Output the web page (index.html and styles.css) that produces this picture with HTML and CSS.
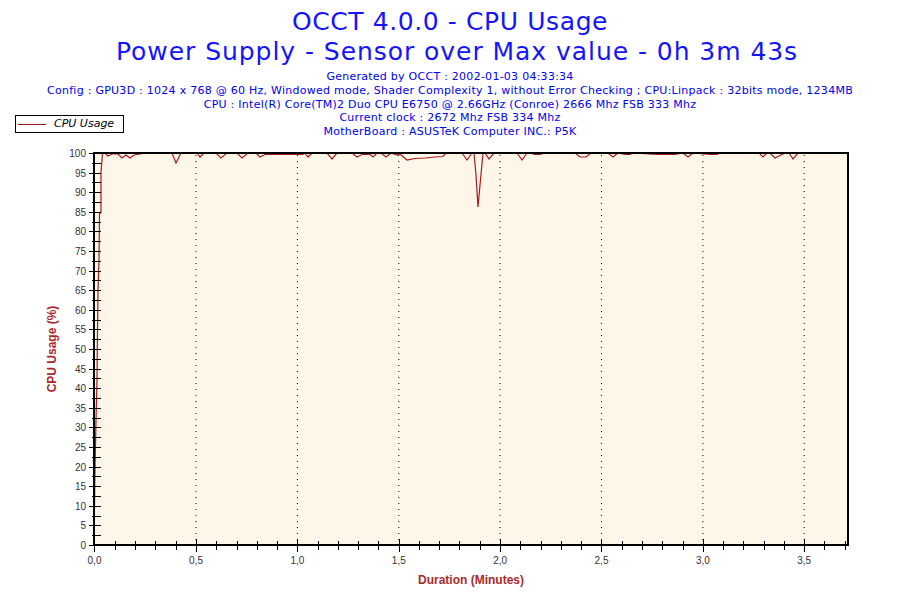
FILE: index.html
```html
<!DOCTYPE html>
<html>
<head>
<meta charset="utf-8">
<title>OCCT 4.0.0 - CPU Usage</title>
<link rel="stylesheet" href="styles.css">
</head>
<body>
<div class="page">
  <header class="header">
    <div class="title">
      <div class="title-main">OCCT 4.0.0 - CPU Usage</div>
      <div class="title-sub">Power Supply - Sensor over Max value - 0h 3m 43s</div>
    </div>
    <div class="info">
      <div>Generated by OCCT : 2002-01-03 04:33:34</div>
      <div>Config : GPU3D : 1024 x 768 @ 60 Hz, Windowed mode, Shader Complexity 1, without Error Checking ; CPU:Linpack : 32bits mode, 1234MB</div>
      <div>CPU : Intel(R) Core(TM)2 Duo CPU E6750 @ 2.66GHz (Conroe) 2666 Mhz FSB 333 Mhz</div>
      <div>Current clock : 2672 Mhz FSB 334 Mhz</div>
      <div>MotherBoard : ASUSTeK Computer INC.: P5K</div>
    </div>
    <div class="legend">
      <span class="legend-line"></span>
      <span class="legend-text">CPU Usage</span>
    </div>
  </header>
  <svg class="chart" width="900" height="460" viewBox="0 140 900 460" xmlns="http://www.w3.org/2000/svg">
    <rect class="plot-bg" x="94" y="153" width="754" height="392"/>
    <g class="grid">
      <line x1="196" y1="155" x2="196" y2="545"/>
      <line x1="297.4" y1="155" x2="297.4" y2="545"/>
      <line x1="398.8" y1="155" x2="398.8" y2="545"/>
      <line x1="500.1" y1="155" x2="500.1" y2="545"/>
      <line x1="601.5" y1="155" x2="601.5" y2="545"/>
      <line x1="702.9" y1="155" x2="702.9" y2="545"/>
      <line x1="804.2" y1="155" x2="804.2" y2="545"/>
    </g>
    <polyline class="data" points="94,545 95,470 96,420 97,380 97.5,330 98,290 99,260 99.5,213 101,213 101,172 102,160 102.5,153 105,153 108,156 112,154 118,154 122,158 126,155 130,158 134,155 140,154 145,153 172,153 176,163 181,153 197,153 200,157 204,153 216,153 221,158 227,153 237,153 242,158 248,153 256,153 260,157 265,154.5 272,154.5 303,154.5 305,153 308,157 312,153 327,153 332,159 337,153 352,153 357,157 362,154.5 370,154.5 373,157 377,153 381,153 386,157 391,153 397,155 400,154 407,160 415,158.5 425,158 435,157 443,156.5 446,153 462,153 467,160 472,153 474,153 476,175 478,207 480,185 483,153 485,153 489,159 494,153 517,153 522,160 527,153 532,153 534,154.5 540,154.5 545,153 575,153 580,157 586,157 591,153 608,153 613,157 618,153 625,154.5 630,154.5 633,153 657,154.5 675,154.5 683,153 688,157 693,153 710,154.5 717,154.5 720,153 759,153 763,157 767,153 770,153 775,158 781,155 785,153 789,153 793,159 798,153 848,153"/>
    <g class="border">
      <line x1="93" y1="153" x2="849" y2="153"/>
      <line x1="848" y1="152" x2="848" y2="546"/>
    </g>
    <g class="axis">
      <line x1="94" y1="152" x2="94" y2="546"/>
      <line x1="93" y1="545" x2="849" y2="545"/>
    </g>
    <path class="ticks" d="M89 545.5H101M89 525.5H101M89 506.5H101M89 486.5H101M89 467.5H101M89 447.5H101M89 427.5H101M89 408.5H101M89 388.5H101M89 369.5H101M89 349.5H101M89 329.5H101M89 310.5H101M89 290.5H101M89 271.5H101M89 251.5H101M89 231.5H101M89 212.5H101M89 192.5H101M89 173.5H101M89 153.5H101M92 535.5H101M92 516.5H101M92 496.5H101M92 476.5H101M92 457.5H101M92 437.5H101M92 418.5H101M92 398.5H101M92 378.5H101M92 359.5H101M92 339.5H101M92 320.5H101M92 300.5H101M92 280.5H101M92 261.5H101M92 241.5H101M92 222.5H101M92 202.5H101M92 182.5H101M92 163.5H101"/>
    <path class="ticks" d="M94.5 539V552M196.5 539V552M297.5 539V552M399.5 539V552M500.5 539V552M601.5 539V552M703.5 539V552M804.5 539V552M115.5 541V550M135.5 541V550M155.5 541V550M176.5 541V550M216.5 541V550M237.5 541V550M257.5 541V550M277.5 541V550M318.5 541V550M338.5 541V550M358.5 541V550M378.5 541V550M419.5 541V550M439.5 541V550M459.5 541V550M480.5 541V550M520.5 541V550M541.5 541V550M561.5 541V550M581.5 541V550M622.5 541V550M642.5 541V550M662.5 541V550M683.5 541V550M723.5 541V550M743.5 541V550M764.5 541V550M784.5 541V550M824.5 541V550M845.5 541V550"/>
    <g class="ylabels">
      <text x="86" y="549">0</text>
      <text x="86" y="529.4">5</text>
      <text x="86" y="509.8">10</text>
      <text x="86" y="490.2">15</text>
      <text x="86" y="470.6">20</text>
      <text x="86" y="451">25</text>
      <text x="86" y="431.4">30</text>
      <text x="86" y="411.8">35</text>
      <text x="86" y="392.2">40</text>
      <text x="86" y="372.6">45</text>
      <text x="86" y="353">50</text>
      <text x="86" y="333.4">55</text>
      <text x="86" y="313.8">60</text>
      <text x="86" y="294.2">65</text>
      <text x="86" y="274.6">70</text>
      <text x="86" y="255">75</text>
      <text x="86" y="235.4">80</text>
      <text x="86" y="215.8">85</text>
      <text x="86" y="196.2">90</text>
      <text x="86" y="176.6">95</text>
      <text x="86" y="157">100</text>
    </g>
    <g class="xlabels">
      <text x="94.5" y="564">0,0</text>
      <text x="196" y="564">0,5</text>
      <text x="297.4" y="564">1,0</text>
      <text x="398.8" y="564">1,5</text>
      <text x="500.1" y="564">2,0</text>
      <text x="601.5" y="564">2,5</text>
      <text x="702.9" y="564">3,0</text>
      <text x="804.2" y="564">3,5</text>
    </g>
    <text class="axis-title" x="471" y="584">Duration (Minutes)</text>
    <text class="axis-title" transform="translate(56 349) rotate(-90)">CPU Usage (%)</text>
  </svg>
</div>
</body>
</html>
```
FILE: styles.css
```css
html, body {
  margin: 0;
  padding: 0;
  background: #ffffff;
}

.page {
  width: 900px;
  height: 600px;
  overflow: hidden;
}

.header {
  position: relative;
  height: 140px;
  box-sizing: border-box;
  padding-top: 7px;
  font-family: "DejaVu Sans", Verdana, sans-serif;
  text-align: center;
}

.title {
  font-size: 25px;
  line-height: 30px;
  color: #1414ff;
}

.title-main {
  letter-spacing: 0.6px;
}

.title-sub {
  letter-spacing: 0.95px;
  padding-left: 14px;
}

.info {
  margin-top: 3px;
  font-size: 11px;
  line-height: 13.75px;
  letter-spacing: 0.26px;
  color: #0000f0;
}

.legend {
  position: absolute;
  left: 15px;
  top: 115px;
  width: 109px;
  height: 18px;
  box-sizing: border-box;
  border: 1px solid #000000;
  background: #ffffff;
  display: flex;
  align-items: center;
  padding-left: 2px;
  gap: 8px;
}

.legend-line {
  display: block;
  width: 28px;
  height: 1px;
  background: #a51c1c;
}

.legend-text {
  font-family: "DejaVu Sans", Verdana, sans-serif;
  font-style: italic;
  font-size: 11px;
  line-height: 14px;
  color: #000000;
}

.chart {
  display: block;
}

.plot-bg {
  fill: #fdf6e9;
}

.grid line {
  stroke: #000000;
  stroke-width: 1;
  stroke-dasharray: 1 5;
}

.data {
  fill: none;
  stroke: #a51c1c;
  stroke-width: 1.2;
  stroke-linejoin: miter;
}

.border line,
.axis line {
  stroke: #000000;
  stroke-width: 2;
}

.ticks {
  stroke: #000000;
  stroke-width: 1;
  fill: none;
  shape-rendering: crispEdges;
}

.ylabels text {
  font-family: "Liberation Sans", Arial, sans-serif;
  font-size: 10px;
  fill: #333333;
  text-anchor: end;
}

.xlabels text {
  font-family: "Liberation Sans", Arial, sans-serif;
  font-size: 10px;
  fill: #333333;
  text-anchor: middle;
}

.axis-title {
  font-family: "Liberation Sans", Arial, sans-serif;
  font-size: 12px;
  font-weight: bold;
  fill: #aa2a2a;
  text-anchor: middle;
}
```
